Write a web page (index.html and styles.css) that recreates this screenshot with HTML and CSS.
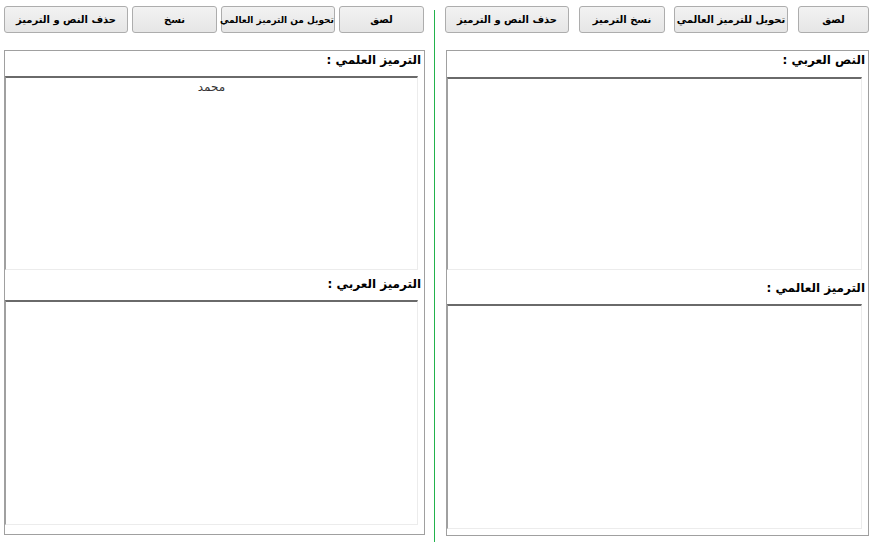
FILE: index.html
```html
<!DOCTYPE html>
<html lang="ar">
<head>
    <meta charset="UTF-8">
    <meta name="viewport" content="width=device-width, initial-scale=1.0">
    <title>الترميز العالمي</title>
    <link rel="stylesheet" href="styles.css">
</head>
<body>
    <div class="page">
        <!-- Left half: convert back from the universal encoding -->
        <div class="column column-left">
            <div class="toolbar">
                <button class="btn btn-clear-l">حذف النص و الترميز</button>
                <button class="btn btn-copy-l">نسخ</button>
                <button class="btn btn-convert-l">تحويل من الترميز العالمي</button>
                <button class="btn btn-paste-l">لصق</button>
            </div>
            <div class="panel">
                <div class="label">الترميز العلمي :</div>
                <textarea class="box box-top centered">محمد</textarea>
                <div class="label label-second">الترميز العربي :</div>
                <textarea class="box box-bottom"></textarea>
            </div>
        </div>

        <div class="divider"></div>

        <!-- Right half: Arabic text to the universal encoding -->
        <div class="column column-right">
            <div class="toolbar">
                <button class="btn btn-clear-r">حذف النص و الترميز</button>
                <button class="btn btn-copy-r">نسخ الترميز</button>
                <button class="btn btn-convert-r">تحويل للترميز العالمي</button>
                <button class="btn btn-paste-r">لصق</button>
            </div>
            <div class="panel panel-right">
                <div class="label label-first-r">النص العربي :</div>
                <textarea class="box box-top-r"></textarea>
                <div class="label label-second-r">الترميز العالمي :</div>
                <textarea class="box box-bottom"></textarea>
            </div>
        </div>
    </div>
</body>
</html>
```

FILE: styles.css
```css
html, body {
    margin: 0;
    padding: 0;
    background: #fff;
}

body {
    font-family: 'DejaVu Sans', 'Noto Sans', sans-serif;
    color: #000;
    width: 873px;
    height: 542px;
    overflow: hidden;
}

.page {
    display: flex;
    align-items: flex-start;
    padding-left: 4px;
}

.column {
    display: flex;
    flex-direction: column;
}

.column-left {
    width: 421px;
}

.column-right {
    width: 424px;
}

.divider {
    width: 1px;
    height: 532px;
    margin: 10px 10px 0 9px;
    background: #22b24c;
}

.toolbar {
    display: flex;
    margin-top: 6px;
    height: 27px;
}

.btn {
    height: 27px;
    padding: 0;
    border: 1px solid #adadad;
    border-radius: 3px;
    background: linear-gradient(#f2f2f2, #e6e6e6);
    font-family: inherit;
    font-size: 10px;
    font-weight: bold;
    color: #000;
    direction: rtl;
    white-space: nowrap;
}

.btn-clear-l { width: 124px; }
.btn-copy-l { width: 85px; margin-left: 4px; }
.btn-convert-l { width: 114px; margin-left: 4px; font-size: 9px; }
.btn-paste-l { width: 85px; margin-left: 4px; }

.btn-clear-r { width: 124px; }
.btn-copy-r { width: 86px; margin-left: 10px; }
.btn-convert-r { width: 114px; margin-left: 9px; }
.btn-paste-r { width: 71px; margin-left: 10px; }

.panel {
    margin-top: 17px;
    height: 483px;
    border: 1px solid #a0a0a0;
    display: flex;
    flex-direction: column;
}

.panel-right {
    margin-left: 1px;
    height: 484px;
}

.label {
    direction: rtl;
    text-align: right;
    font-size: 12px;
    font-weight: bold;
    height: 25px;
    line-height: 18px;
    padding-right: 3px;
    box-sizing: border-box;
}

.label-second {
    height: 30px;
    padding-top: 5px;
}

.label-first-r {
    height: 26px;
}

.label-second-r {
    height: 34px;
    padding-top: 9px;
}

.box {
    display: block;
    margin: 0;
    padding: 2px 4px;
    width: calc(100% - 6px);
    box-sizing: border-box;
    resize: none;
    outline: none;
    border-top: 2px solid #6a6a6a;
    border-left: 1px solid #a0a0a0;
    border-right: 1px solid #ececec;
    border-bottom: 1px solid #ececec;
    background: #fff;
    font-family: inherit;
    font-size: 12px;
    color: #333;
    direction: rtl;
}

.centered {
    text-align: center;
}

.box-top {
    height: 194px;
}

.box-top-r {
    height: 193px;
}

.box-bottom {
    height: 225px;
}
```
